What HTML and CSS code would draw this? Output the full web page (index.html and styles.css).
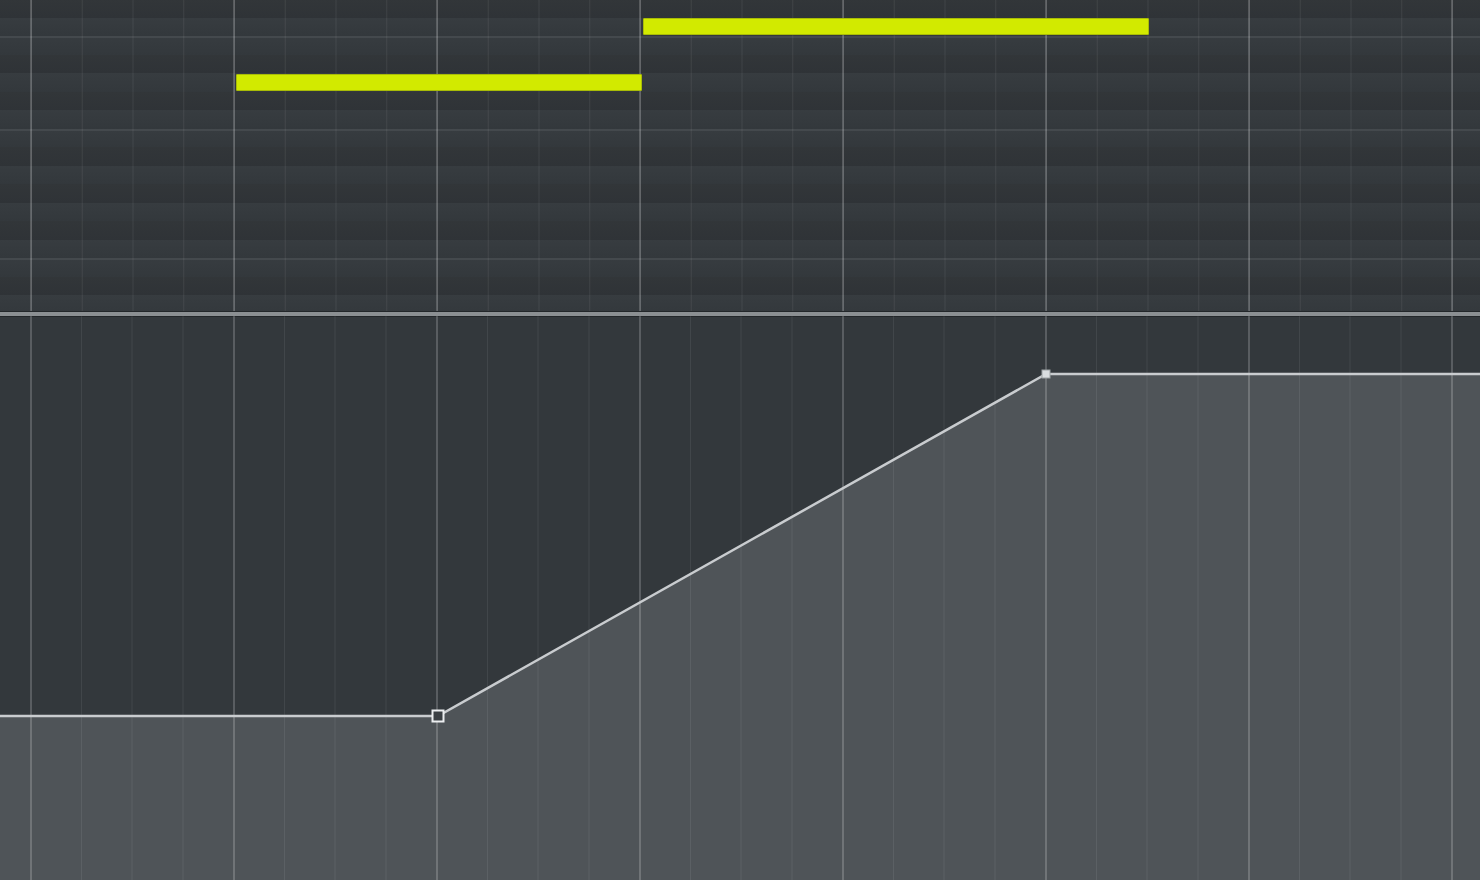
FILE: index.html
```html
<!DOCTYPE html>
<html lang="en">
<head>
    <meta charset="UTF-8">
    <title>Piano Roll</title>
    <link rel="stylesheet" href="styles.css">
</head>
<body>
    <div class="editor">
        <!-- note lanes -->
        <section class="roll">
            <div class="keys">
                <div class="row black"></div>
                <div class="row"></div>
                <div class="row octave"></div>
                <div class="row black"></div>
                <div class="row"></div>
                <div class="row black"></div>
                <div class="row"></div>
                <div class="row octave"></div>
                <div class="row black"></div>
                <div class="row"></div>
                <div class="row black"></div>
                <div class="row"></div>
                <div class="row black"></div>
                <div class="row"></div>
                <div class="row octave"></div>
                <div class="row black"></div>
                <div class="row"></div>
            </div>
            <div class="grid"></div>
            <div class="note" style="left: 236px; top: 74px; width: 406px;"></div>
            <div class="note" style="left: 643px; top: 18px; width: 506px;"></div>
        </section>

        <div class="splitter"></div>

        <!-- automation lane -->
        <section class="automation">
            <svg width="1480" height="564" viewBox="0 0 1480 564">
                <defs>
                    <pattern id="beats" patternUnits="userSpaceOnUse" x="30" y="0" width="203" height="564">
                        <rect x="0" y="0" width="2" height="564" fill="rgba(255,255,255,0.19)"/>
                        <rect x="51" y="0" width="1" height="564" fill="rgba(255,255,255,0.07)"/>
                        <rect x="101.5" y="0" width="1" height="564" fill="rgba(255,255,255,0.07)"/>
                        <rect x="152.5" y="0" width="1" height="564" fill="rgba(255,255,255,0.07)"/>
                    </pattern>
                </defs>
                <polygon class="env-fill" points="0,400 438,400 1046,58 1480,58 1480,564 0,564"/>
                <rect x="0" y="0" width="1480" height="564" fill="url(#beats)"/>
                <polyline class="env-line" points="0,400 438,400 1046,58 1480,58"/>
                <rect class="point" x="432.5" y="394.5" width="11" height="11"/>
                <rect class="point selected" x="1042" y="54" width="8" height="8"/>
            </svg>
        </section>
    </div>
</body>
</html>
```

FILE: styles.css
```css
* {
    margin: 0;
    padding: 0;
    box-sizing: border-box;
}

html, body {
    width: 1480px;
    height: 880px;
    overflow: hidden;
    background: #33383c;
    font-family: 'Liberation Sans', Arial, sans-serif;
}

.editor {
    display: flex;
    flex-direction: column;
    width: 1480px;
    height: 880px;
}

.roll {
    position: relative;
    height: 311px;
    overflow: hidden;
    flex-shrink: 0;
}

.keys {
    display: flex;
    flex-direction: column;
    margin-top: -1px;
}

.row {
    height: 18.5px;
    background: linear-gradient(#373c40, #33383c);
}

.row.black {
    background: linear-gradient(#323639, #2f3337);
}

/* E/F and B/C boundaries */
.row.octave {
    box-shadow: inset 0 2px 0 #44494d;
}

.grid {
    position: absolute;
    inset: 0;
    background-image:
        linear-gradient(to right, rgba(255, 255, 255, 0.19) 0 2px, transparent 2px),
        linear-gradient(to right, rgba(255, 255, 255, 0.07) 0 1px, transparent 1px);
    background-size: 203px 100%, 50.75px 100%;
    background-position: 30px 0, 31px 0;
}

.note {
    position: absolute;
    height: 17px;
    background: #d2ea00;
    border: 1px solid #a9bc06;
    border-radius: 1px;
}

.splitter {
    height: 6px;
    flex-shrink: 0;
    background: #8b8f92;
    border-top: 1px solid #23272a;
    border-bottom: 1px solid #23272a;
}

.automation {
    height: 563px;
    background: #33383c;
}

.automation svg {
    display: block;
    margin-top: -1px;
}

.env-fill {
    fill: #4f5458;
}

.env-line {
    fill: none;
    stroke: #c9cccf;
    stroke-width: 2.5;
}

.point {
    fill: #3b4044;
    stroke: #eceef0;
    stroke-width: 2;
}

.point.selected {
    fill: #d9dde0;
    stroke: #9ea3a6;
    stroke-width: 1;
}
```
